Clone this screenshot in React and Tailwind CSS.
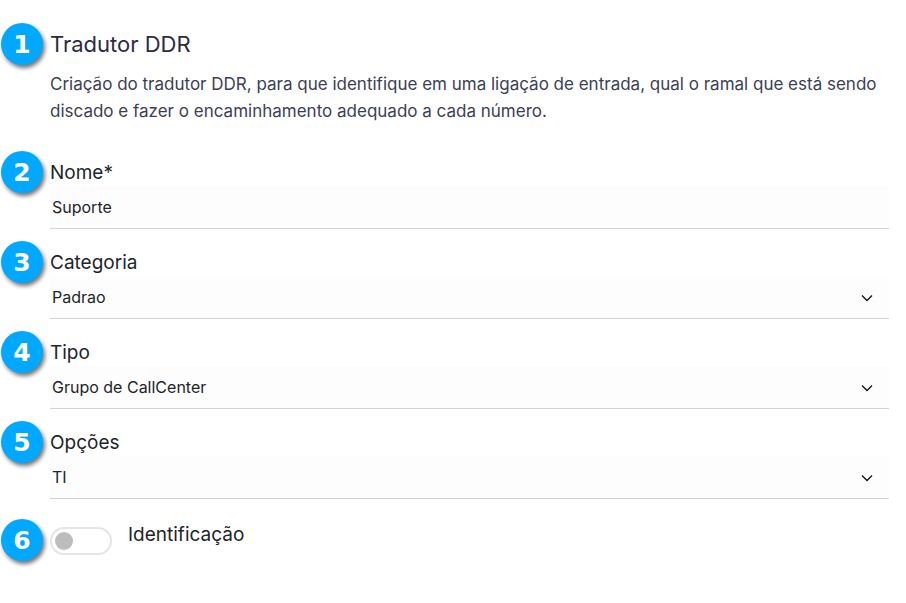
import React, { useState } from 'react';

const StepBadge = ({ number }) => (
  <span className="-mt-2 flex h-[42px] w-[42px] shrink-0 items-center justify-center rounded-full bg-[#00a8ff] font-['DejaVu_Sans',sans-serif] text-[25px] leading-none font-bold text-white shadow-[2px_3px_4px_rgba(0,0,0,0.55)]">
    {number}
  </span>
);

const Row = ({ number, children }) => (
  <div className="flex items-start gap-[7px]">
    <StepBadge number={number} />
    <div className="min-w-0 flex-1">{children}</div>
  </div>
);

const labelClass = 'block text-[19px] leading-[27px] text-[#212529]';
const controlClass =
  'block h-[43px] w-full appearance-none rounded-none border-b border-[#ced4da] bg-[#fdfdfd] pl-0.5 text-base text-[#212529] outline-none';

const SelectField = ({ id, label, options }) => (
  <>
    <label htmlFor={id} className={labelClass}>
      {label}
    </label>
    <div className="relative">
      <select id={id} className={`${controlClass} pr-10`}>
        {options.map((option) => (
          <option key={option}>{option}</option>
        ))}
      </select>
      <svg
        className="pointer-events-none absolute top-1/2 right-4 h-3 w-3 -translate-y-1/2"
        viewBox="0 0 12 12"
        fill="none"
        stroke="#111"
        strokeWidth="1.3"
        aria-hidden="true"
      >
        <path d="M1 3.5L6 8.5L11 3.5" />
      </svg>
    </div>
  </>
);

const App = () => {
  const [name, setName] = useState('Suporte');
  const [identify, setIdentify] = useState(false);

  return (
    <form className="min-h-screen bg-white pt-[31px] pr-[17px] pb-8 pl-px font-[Inter,sans-serif]">
      {/* Header */}
      <Row number={1}>
        <h1 className="text-[22px] leading-[27px] text-[#2b2d42]">Tradutor DDR</h1>
        <p className="mt-[13px] text-[17px] leading-[27px] text-[#3b3f56]">
          Criação do tradutor DDR, para que identifique em uma ligação de entrada, qual o ramal que está sendo
          discado e fazer o encaminhamento adequado a cada número.
        </p>
      </Row>

      {/* Fields */}
      <div className="mt-[34px] flex flex-col gap-5">
        <Row number={2}>
          <label htmlFor="nome" className={labelClass}>
            Nome*
          </label>
          <input
            id="nome"
            type="text"
            className={controlClass}
            value={name}
            onChange={(e) => setName(e.target.value)}
          />
        </Row>
        <Row number={3}>
          <SelectField id="categoria" label="Categoria" options={['Padrao']} />
        </Row>
        <Row number={4}>
          <SelectField id="tipo" label="Tipo" options={['Grupo de CallCenter']} />
        </Row>
        <Row number={5}>
          <SelectField id="opcoes" label="Opções" options={['TI']} />
        </Row>
      </div>

      {/* Toggle */}
      <div className="mt-7">
        <Row number={6}>
          <div className="flex items-start gap-4">
            <input
              id="identificacao"
              type="checkbox"
              role="switch"
              checked={identify}
              onChange={(e) => setIdentify(e.target.checked)}
              className="flex h-7 w-[62px] shrink-0 appearance-none items-center rounded-full border-2 border-[#e5e5e5] bg-white px-[3px] before:h-[18px] before:w-[18px] before:rounded-full before:bg-[#bdbdbd] checked:justify-end checked:before:bg-[#00a8ff]"
            />
            <label htmlFor="identificacao" className="-mt-1.5 text-[19px] leading-[27px] text-[#212529]">
              Identificação
            </label>
          </div>
        </Row>
      </div>
    </form>
  );
};

export default App;
